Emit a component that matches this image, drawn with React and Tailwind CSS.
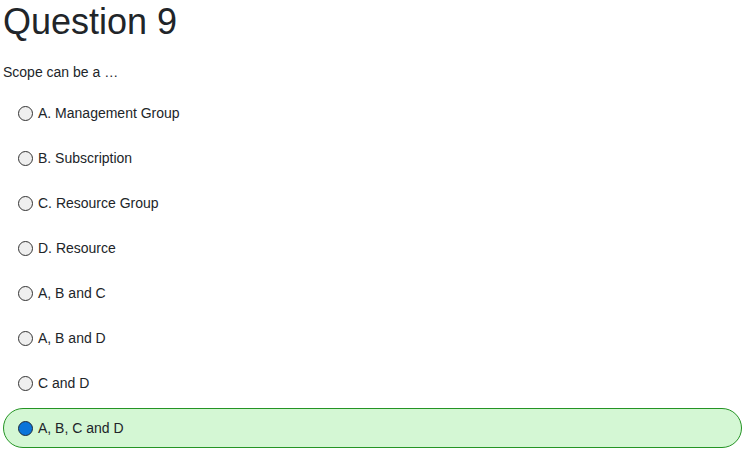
import React from 'react';

const options = [
  'A. Management Group',
  'B. Subscription',
  'C. Resource Group',
  'D. Resource',
  'A, B and C',
  'A, B and D',
  'C and D',
  'A, B, C and D',
];

export default function App() {
  const selected = 7;

  return (
    <main className="w-[744px] h-[454px] bg-white pl-[3px] pr-[2px] text-[#212529] font-['Liberation_Sans',Arial,sans-serif] overflow-hidden">
      <h1 className="text-[36px] leading-[44px] font-normal">Question 9</h1>
      <p className="mt-[18px] text-[14px] leading-[21px]">Scope can be a …</p>
      <div className="mt-[10px] flex flex-col gap-[5px]">
        {options.map((label, i) => {
          const on = i === selected;
          return (
            <label
              key={label}
              className={
                on
                  ? 'flex items-center h-[40px] pl-[14px] rounded-full border border-[#249424] bg-[#d4f7d4]'
                  : 'flex items-center h-[40px] pl-[14px] rounded-full border border-transparent'
              }
            >
              <span
                className={
                  on
                    ? 'w-[15px] h-[15px] rounded-full border border-[#1f2a3a] bg-[#0a74da]'
                    : 'w-[15px] h-[15px] rounded-full border border-[#333] bg-[#efefef]'
                }
              />
              <span className="ml-[5px] text-[14px] leading-[21px]">{label}</span>
            </label>
          );
        })}
      </div>
    </main>
  );
}
